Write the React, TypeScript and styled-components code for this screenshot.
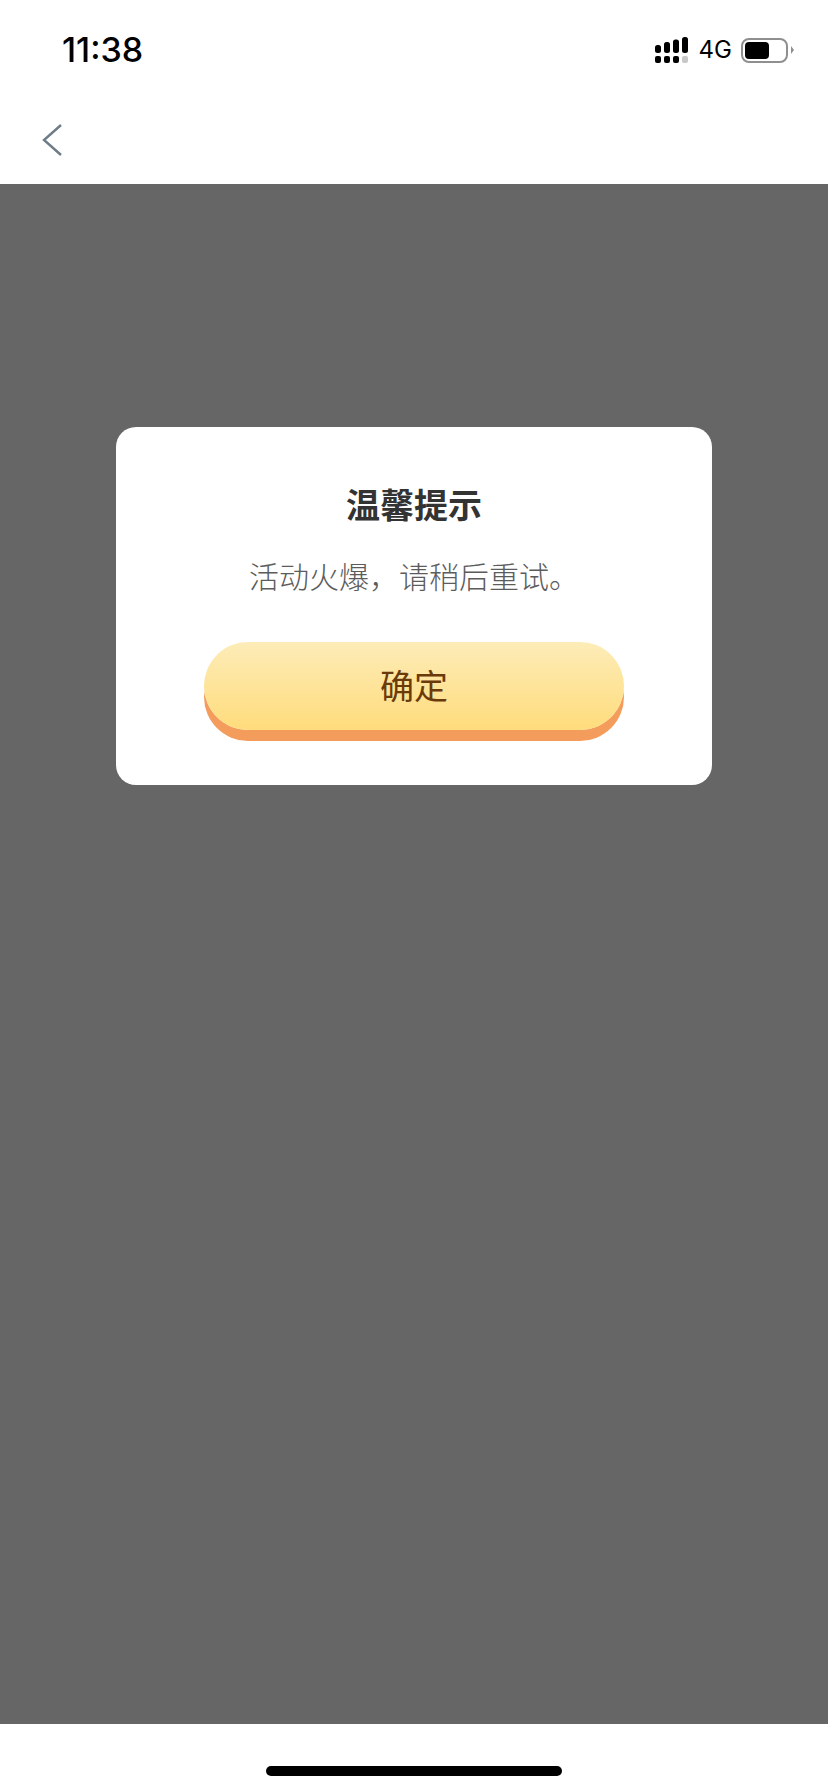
import React from "react";
import styled, { createGlobalStyle } from "styled-components";

const GlobalStyle = createGlobalStyle`
  html, body {
    margin: 0;
    padding: 0;
    background: #fff;
    font-family: "Noto Sans CJK SC", "Noto Sans", sans-serif;
  }
`;

const Page = styled.div`
  display: flex;
  flex-direction: column;
  width: 828px;
  height: 1792px;
  overflow: hidden;
`;

const StatusBar = styled.div`
  display: flex;
  align-items: center;
  justify-content: space-between;
  height: 50px;
  padding: 25px 34px 24px 62px;
  box-sizing: content-box;
`;

const Clock = styled.div`
  font-family: Inter, "Liberation Sans", sans-serif;
  font-size: 34px;
  font-weight: 500;
  line-height: 50px;
  color: #000;
`;

const StatusIcons = styled.div`
  display: flex;
  align-items: center;
`;

const NetworkLabel = styled.span`
  font-family: Inter, "Liberation Sans", sans-serif;
  font-size: 24px;
  line-height: 26px;
  margin: 0 9px 0 11px;
  color: #000;
`;

const Battery = styled.div`
  display: flex;
  box-sizing: border-box;
  width: 47px;
  height: 25px;
  padding: 2px;
  border: 2px solid #8f8f8f;
  border-radius: 8px;
`;

const BatteryFill = styled.div`
  width: 24px;
  background: #000;
  border-radius: 4px;
`;

const BatteryNub = styled.div`
  width: 0;
  height: 0;
  margin-left: 3px;
  border-top: 4px solid transparent;
  border-bottom: 4px solid transparent;
  border-left: 3px solid #8f8f8f;
`;

const NavBar = styled.div`
  display: flex;
  align-items: center;
  height: 85px;
  padding: 0 0 3px 42px;
  box-sizing: border-box;
`;

const Overlay = styled.div`
  flex: 1;
  display: flex;
  flex-direction: column;
  align-items: center;
  padding-top: 243px;
  background: #666;
`;

const Dialog = styled.div`
  display: flex;
  flex-direction: column;
  align-items: center;
  box-sizing: border-box;
  width: 596px;
  height: 358px;
  padding-top: 57px;
  background: #fff;
  border-radius: 20px;
`;

const Title = styled.div`
  font-size: 34px;
  font-weight: 700;
  line-height: 40px;
  color: #333;
`;

const Message = styled.div`
  margin-top: 31px;
  font-size: 30px;
  font-weight: 300;
  line-height: 40px;
  color: #5c5c5c;
`;

const ConfirmButton = styled.button`
  display: flex;
  align-items: center;
  justify-content: center;
  box-sizing: border-box;
  width: 420px;
  height: 88px;
  margin-top: 47px;
  padding: 0 0 4px;
  border: none;
  border-radius: 44px;
  background: linear-gradient(180deg, #fdecb8 0%, #ffdc7c 100%);
  box-shadow: 0 11px 0 #f49c5c;
  font-family: inherit;
  font-size: 34px;
  color: #6b3a0a;
`;

const BottomBar = styled.div`
  display: flex;
  justify-content: center;
  height: 68px;
  padding-top: 42px;
  box-sizing: border-box;
  background: #fff;
`;

const HomeIndicator = styled.div`
  width: 296px;
  height: 10px;
  background: #000;
  border-radius: 5px;
`;

const signalBars = [
  { x: 0, y: 8, h: 8 },
  { x: 9, y: 5, h: 11 },
  { x: 18, y: 2.5, h: 13.5 },
  { x: 27, y: 0, h: 16 },
];

const SignalIcon = () => (
  <svg width="33" height="26" viewBox="0 0 33 26">
    {signalBars.map((b) => (
      <rect key={b.x} x={b.x} y={b.y} width="6" height={b.h} rx="2.5" fill="#000" />
    ))}
    {[0, 9, 18, 27].map((x) => (
      <rect key={x} x={x} y="19" width="6" height="7" rx="2" fill={x === 27 ? "#c8c8c8" : "#000"} />
    ))}
  </svg>
);

const BackIcon = () => (
  <svg width="22" height="32" viewBox="0 0 22 32" fill="none">
    <polyline points="19,1 2,16 19,31" stroke="#6d7c87" strokeWidth="2.4" />
  </svg>
);

export default function App() {
  return (
    <Page>
      <GlobalStyle />
      <StatusBar>
        <Clock>11:38</Clock>
        <StatusIcons>
          <SignalIcon />
          <NetworkLabel>4G</NetworkLabel>
          <Battery>
            <BatteryFill />
          </Battery>
          <BatteryNub />
        </StatusIcons>
      </StatusBar>
      <NavBar>
        <BackIcon />
      </NavBar>
      <Overlay>
        <Dialog>
          <Title>温馨提示</Title>
          <Message>活动火爆，请稍后重试。</Message>
          <ConfirmButton>确定</ConfirmButton>
        </Dialog>
      </Overlay>
      <BottomBar>
        <HomeIndicator />
      </BottomBar>
    </Page>
  );
}
